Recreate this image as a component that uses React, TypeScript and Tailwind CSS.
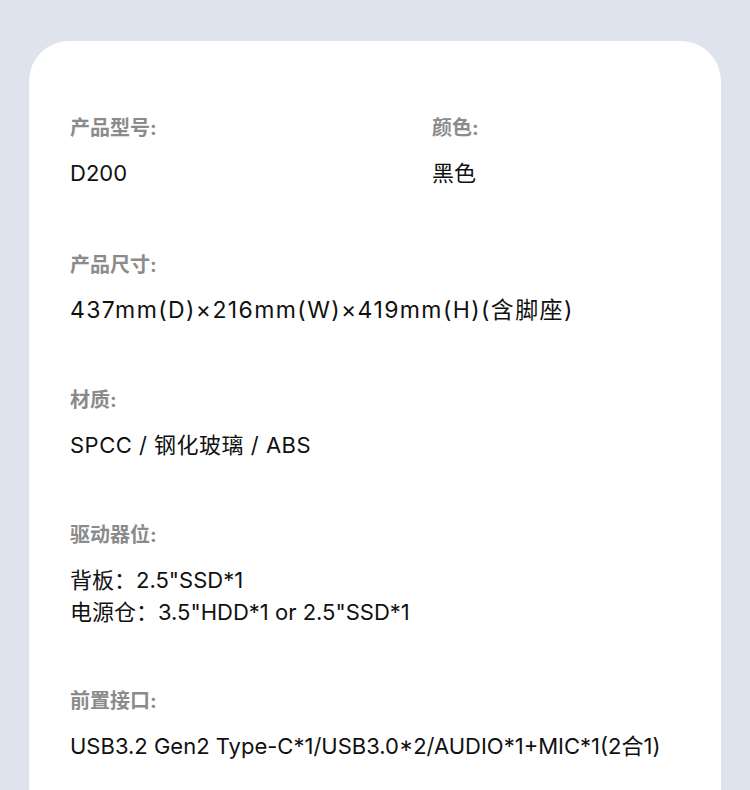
import React from 'react'

const font = { fontFamily: 'Inter, "Noto Sans CJK SC", sans-serif' }

function Label({ children }: { children: React.ReactNode }) {
  return <p className="text-[20px] leading-[24px] font-bold text-[#8b8b8b]">{children}</p>
}

function Value({ children, className = '' }: { children: React.ReactNode; className?: string }) {
  return <p className={`text-[22px] leading-[32px] text-[#111111] ${className}`}>{children}</p>
}

export default function App() {
  return (
    <div className="w-[750px] h-[790px] overflow-hidden bg-[#dfe3ee] pt-[41px] px-[29px]" style={font}>
      <div className="w-[692px] h-[800px] bg-white rounded-[40px] pt-[75px] px-[41px]">
        <div className="flex">
          <div className="w-[362px] flex flex-col gap-[17px]">
            <Label>产品型号:</Label>
            <Value>D200</Value>
          </div>
          <div className="flex flex-col gap-[17px]">
            <Label>颜色:</Label>
            <Value>黑色</Value>
          </div>
        </div>

        <div className="mt-[64px] flex flex-col gap-[17px]">
          <Label>产品尺寸:</Label>
          <Value className="tracking-[1.4px] text-[23px]">437mm(D)×216mm(W)×419mm(H)(含脚座)</Value>
        </div>

        <div className="mt-[62px] flex flex-col gap-[17px]">
          <Label>材质:</Label>
          <Value className="tracking-[0.5px]">SPCC / 钢化玻璃 / ABS</Value>
        </div>

        <div className="mt-[62px] flex flex-col gap-[17px]">
          <Label>驱动器位:</Label>
          <div>
            <Value>背板：2.5"SSD*1</Value>
            <Value>电源仓：3.5"HDD*1 or 2.5"SSD*1</Value>
          </div>
        </div>

        <div className="mt-[61px] flex flex-col gap-[17px]">
          <Label>前置接口:</Label>
          <Value>USB3.2 Gen2 Type-C*1/USB3.0*2/AUDIO*1+MIC*1(2合1)</Value>
        </div>
      </div>
    </div>
  )
}
